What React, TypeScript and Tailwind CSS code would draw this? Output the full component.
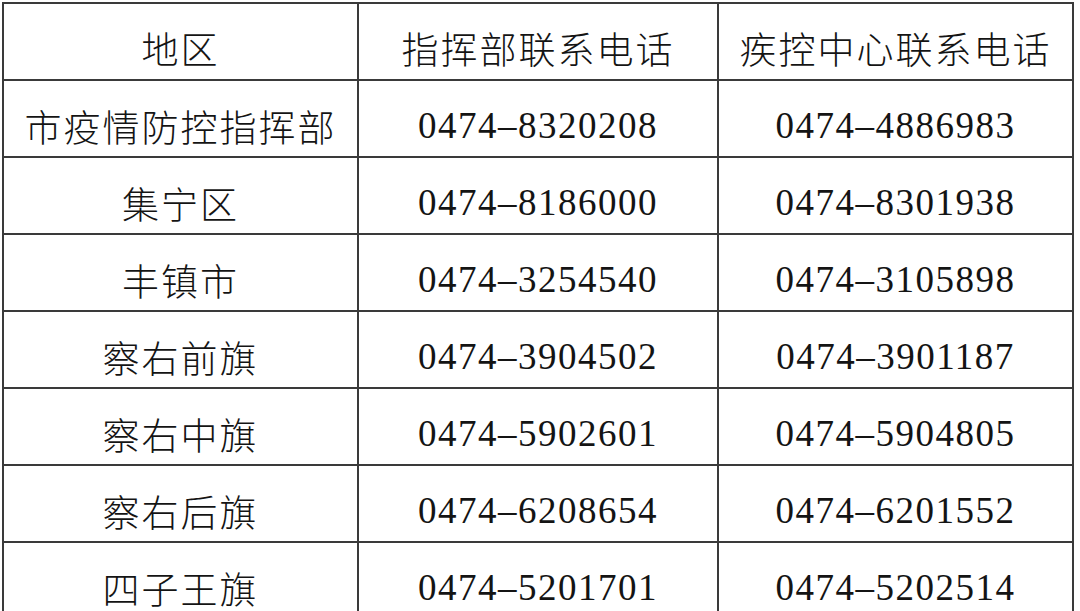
import React from 'react';

const rows = [
  { area: "市疫情防控指挥部", hq: "0474–8320208", cdc: "0474–4886983" },
  { area: "集宁区", hq: "0474–8186000", cdc: "0474–8301938" },
  { area: "丰镇市", hq: "0474–3254540", cdc: "0474–3105898" },
  { area: "察右前旗", hq: "0474–3904502", cdc: "0474–3901187" },
  { area: "察右中旗", hq: "0474–5902601", cdc: "0474–5904805" },
  { area: "察右后旗", hq: "0474–6208654", cdc: "0474–6201552" },
  { area: "四子王旗", hq: "0474–5201701", cdc: "0474–5202514" },
];

const cell =
  "h-[77px] flex items-center justify-center border-r-2 border-b-2 border-[#3a3a3a] whitespace-nowrap text-[37px] leading-none";

const App: React.FC = () => (
  <div className="w-[1080px] h-[611px] overflow-hidden bg-white pt-[2px] pl-[2px] text-[#141414] font-['Liberation_Serif','Noto_Sans_CJK_SC',serif]">
    <div className="grid grid-cols-[355px_360px_355px] w-fit border-t-2 border-l-2 border-[#3a3a3a]">
      <div className={`${cell} pt-[20px] font-light tracking-[2px]`}>地区</div>
      <div className={`${cell} pt-[20px] font-light tracking-[2px]`}>指挥部联系电话</div>
      <div className={`${cell} pt-[20px] font-light tracking-[2px]`}>疾控中心联系电话</div>
      {rows.map((row, idx) => (
        <React.Fragment key={idx}>
          <div className={`${cell} pt-[21px] font-light tracking-[2px]`}>{row.area}</div>
          <div className={`${cell} pt-[14px] tracking-[1.5px]`}>{row.hq}</div>
          <div className={`${cell} pt-[14px] tracking-[1.5px]`}>{row.cdc}</div>
        </React.Fragment>
      ))}
    </div>
  </div>
);

export default App;
